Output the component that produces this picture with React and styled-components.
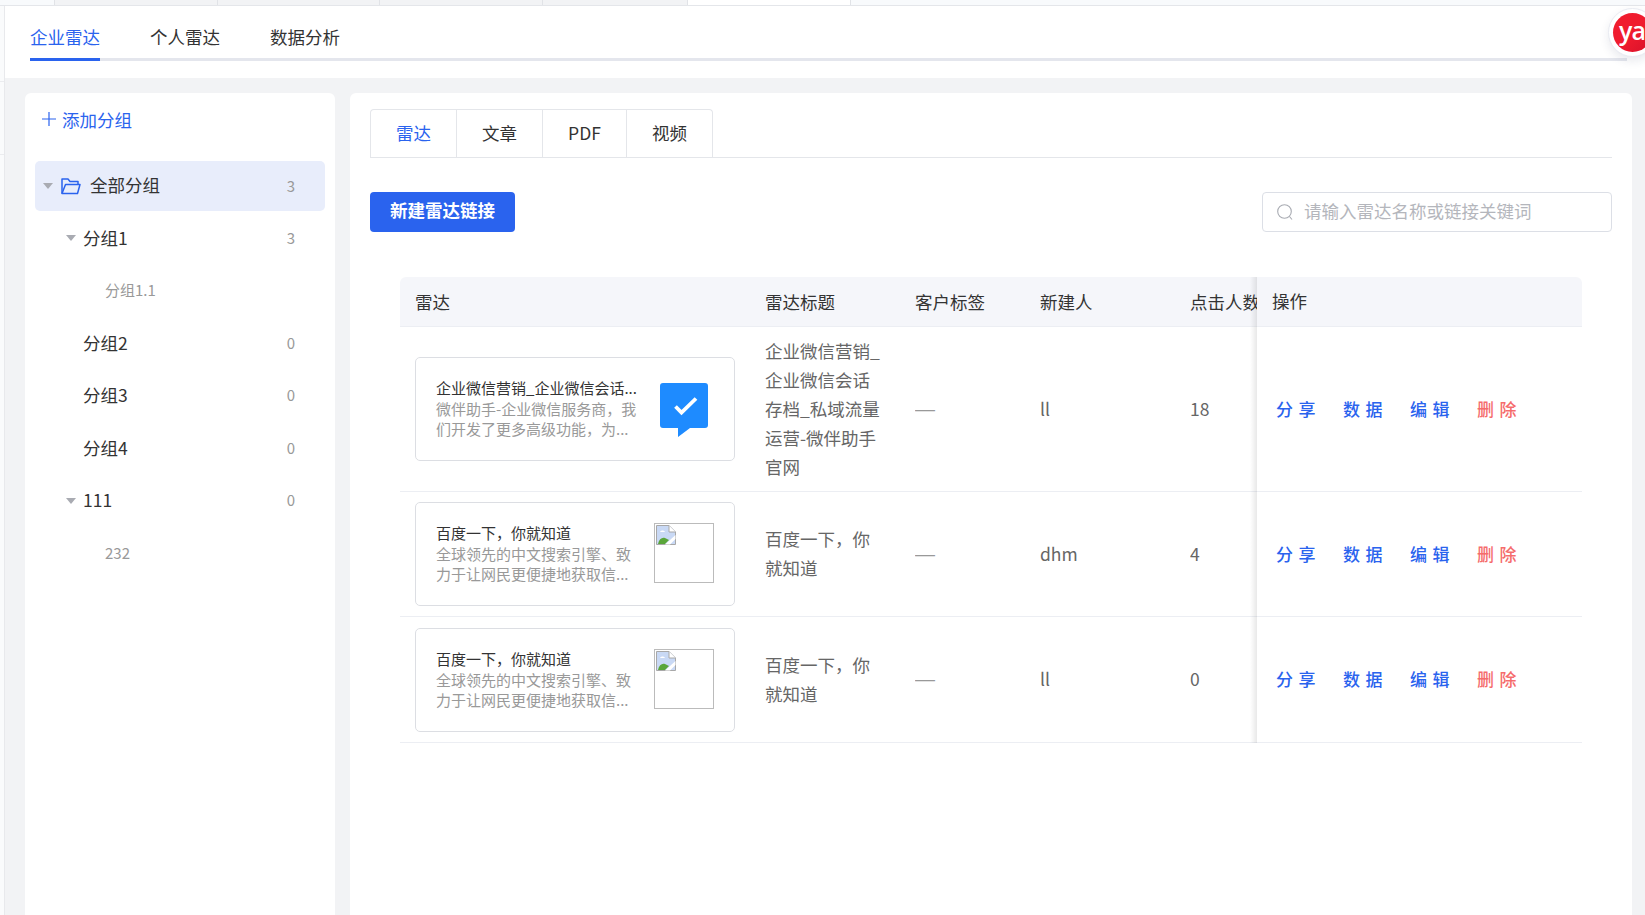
import React from 'react';
import styled, { createGlobalStyle } from 'styled-components';

const GlobalStyle = createGlobalStyle`
  html, body {
    margin: 0;
    padding: 0;
    height: 100%;
    overflow: hidden;
    background: #f2f3f5;
  }
  * { box-sizing: border-box; }
  body {
    font-family: "Noto Sans CJK SC", "Noto Sans", sans-serif;
    color: #333;
  }
`;

const Page = styled.div`
  width: 1645px;
  height: 915px;
  display: flex;
  flex-direction: column;
  position: relative;
  overflow: hidden;
`;

const TopStrip = styled.div`
  height: 6px;
  flex: none;
  display: flex;
  background: #f8fafc;
  border-bottom: 1px solid #e4e6ea;
`;

const StripTab = styled.div`
  width: ${(p) => p.$w}px;
  flex: none;
  background: ${(p) => p.$bg || '#f2f3f5'};
  border-right: 1px solid #e1e3e7;
`;

const Shell = styled.div`
  flex: 1;
  display: flex;
  min-height: 0;
`;

const Rail = styled.div`
  width: 5px;
  flex: none;
  border-right: 1px solid #e8e9ec;
  background:
    linear-gradient(#ebecef, #ebecef) 0 75px / 100% 1px no-repeat,
    linear-gradient(#ebecef, #ebecef) 0 148px / 100% 1px no-repeat,
    #fafbfc;
`;

const Main = styled.div`
  flex: 1;
  min-width: 0;
  display: flex;
  flex-direction: column;
`;

const HeadBar = styled.div`
  height: 72px;
  flex: none;
  background: #fff;
  padding: 0 18px 0 25px;
`;

const HeadTabs = styled.div`
  height: 55px;
  display: flex;
  gap: 50px;
  border-bottom: 3px solid #e4e6ed;
`;

const HeadTab = styled.div`
  height: 55px;
  width: 70px;
  font-size: 17.5px;
  line-height: 62px;
  white-space: nowrap;
  color: ${(p) => (p.$active ? '#2a63ee' : '#333')};
  border-bottom: 3px solid ${(p) => (p.$active ? '#2a63ee' : 'transparent')};
`;

const Content = styled.div`
  flex: 1;
  min-height: 0;
  display: flex;
  gap: 15px;
  padding: 15px 13px 0 20px;
`;

const SidePanel = styled.aside`
  width: 310px;
  flex: none;
  background: #fff;
  border-radius: 6px 6px 0 0;
  padding: 0 10px;
`;

const AddGroup = styled.div`
  height: 68px;
  padding: 0 0 16px 7px;
  display: flex;
  align-items: center;
  gap: 6px;
  font-size: 17.5px;
  color: #2a63ee;
`;

const TreeRow = styled.div`
  height: ${(p) => (p.$root ? 50 : 52.5)}px;
  display: flex;
  align-items: center;
  padding-left: ${(p) => p.$indent}px;
  padding-right: 30px;
  border-radius: 5px;
  background: ${(p) => (p.$root ? '#e8edfb' : 'transparent')};
  margin-bottom: ${(p) => (p.$root ? 1 : 0)}px;
`;

const Caret = styled.span`
  width: 0;
  height: 0;
  flex: none;
  margin-right: 7px;
  border-left: 5px solid transparent;
  border-right: 5px solid transparent;
  border-top: 6px solid #a9abb2;
`;

const FolderIcon = styled.svg`
  width: 20px;
  height: 18px;
  flex: none;
  margin: 0 9px 0 1px;
`;

const RowLabel = styled.span`
  flex: 1;
  margin-top: ${(p) => (p.$top ? -4 : -2)}px;
  font-size: ${(p) => (p.$leaf ? 15 : 17.5)}px;
  color: ${(p) => (p.$leaf ? '#999' : '#333')};
  white-space: nowrap;
`;

const RowCount = styled.span`
  margin-top: -2px;
  font-size: 15px;
  color: #999;
`;

const MainPanel = styled.section`
  flex: 1;
  min-width: 0;
  background: #fff;
  border-radius: 6px 6px 0 0;
  padding: 16px 20px 0 20px;
`;

const TypeTabs = styled.div`
  display: flex;
  height: 49px;
  border-bottom: 1px solid #e4e6ea;
`;

const TypeTab = styled.div`
  width: ${(p) => p.$w}px;
  height: 48px;
  padding-bottom: 2px;
  display: flex;
  align-items: center;
  justify-content: center;
  font-size: 17.5px;
  color: ${(p) => (p.$active ? '#2a63ee' : '#333')};
  border: 1px solid #e4e6ea;
  border-left-width: ${(p) => (p.$first ? 1 : 0)}px;
  border-bottom: 0;
  border-radius: ${(p) => (p.$first ? '4px 0 0 0' : '0')};
  &:last-child { border-radius: 0 4px 0 0; }
`;

const ActionBar = styled.div`
  margin-top: 34px;
  display: flex;
  justify-content: space-between;
  align-items: center;
`;

const NewButton = styled.button`
  width: 145px;
  height: 40px;
  border: 0;
  border-radius: 4px;
  background: #2a63ee;
  color: #fff;
  font-family: inherit;
  font-size: 17.5px;
  font-weight: 700;
  padding: 0 0 5px;
`;

const SearchBox = styled.div`
  width: 350px;
  height: 40px;
  border: 1px solid #dcdfe6;
  border-radius: 4px;
  display: flex;
  align-items: center;
  gap: 11px;
  padding-left: 14px;
  font-size: 17.5px;
  color: #b4b6bc;
`;

const SearchText = styled.span`
  margin-top: -4px;
`;

const Table = styled.div`
  margin: 45px 30px 0 30px;
`;

const GRID = '365px 150px 125px 150px 67px 1fr';

const HeadRow = styled.div`
  display: grid;
  grid-template-columns: ${GRID};
  height: 50px;
  background: #f5f6fa;
  border-bottom: 1px solid #eceef3;
  border-radius: 6px 6px 0 0;
  align-items: center;
  font-size: 17.5px;
  color: #333;
`;

const BodyRow = styled.div`
  display: grid;
  grid-template-columns: ${GRID};
  height: ${(p) => p.$h}px;
  border-bottom: 1px solid #eceef3;
  align-items: center;
  font-size: 17.5px;
  color: #666;
`;

const Cell = styled.div`
  padding-left: ${(p) => (p.$first ? 15 : 0)}px;
  padding-right: ${(p) => (p.$wrap ? 30 : 0)}px;
  padding-bottom: ${(p) => (p.$lift ? 2 : 0)}px;
  white-space: ${(p) => (p.$wrap ? 'normal' : 'nowrap')};
  overflow: hidden;
  line-height: ${(p) => (p.$wrap ? '29px' : 'normal')};
`;

const Dash = styled.span`
  font-family: "Liberation Sans", sans-serif;
  font-size: 20px;
  color: #999;
`;

// fixed right column, its shadow falls over the cells to the left
const FixedCell = styled.div`
  align-self: stretch;
  display: flex;
  align-items: center;
  padding-left: ${(p) => p.$pad}px;
  padding-bottom: ${(p) => p.$lift}px;
  gap: 27px;
  position: relative;
  margin-bottom: -1px;
  &::before {
    content: '';
    position: absolute;
    left: -7px;
    top: 0;
    bottom: 0;
    width: 7px;
    background: linear-gradient(to left, rgba(0, 0, 0, 0.09), rgba(0, 0, 0, 0));
  }
`;

const Card = styled.div`
  width: 320px;
  height: 104px;
  border: 1px solid #dcdee3;
  border-radius: 5px;
  display: flex;
  align-items: center;
  padding-left: 20px;
`;

const CardText = styled.div`
  width: 204px;
  flex: none;
`;

const CardTitle = styled.div`
  font-size: 15px;
  line-height: 20px;
  color: #333;
  white-space: nowrap;
  margin: -1px 0 1px;
`;

const CardDesc = styled.div`
  font-size: 15px;
  line-height: 20px;
  color: #999;
  white-space: nowrap;
`;

const CardThumb = styled.div`
  width: 60px;
  height: 60px;
  flex: none;
  margin: -2px 0 0 14px;
  border: 1px solid #bbb;
  padding: 1px;
`;

const CheckLogo = styled.svg`
  width: 48px;
  height: 54px;
  flex: none;
  margin: 2px 0 0 20px;
`;

const ActionLink = styled.span`
  font-size: 17px;
  font-weight: 500;
  letter-spacing: 5.5px;
  white-space: nowrap;
  width: 40px;
  color: ${(p) => (p.$danger ? '#f56c6c' : '#2a63ee')};
`;

const Badge = styled.div`
  position: absolute;
  left: 1608px;
  top: 8px;
  width: 49px;
  height: 49px;
  border-radius: 50%;
  background: #fff;
  border: 1px solid #e9ebf2;
  box-shadow: 0 4px 10px rgba(40, 50, 90, 0.1);
  padding: 4px;
`;

const BadgeInner = styled.div`
  width: 100%;
  height: 100%;
  border-radius: 50%;
  background: linear-gradient(135deg, #f01c2e 50%, #d7102a);
  color: #fff;
  font-family: "Open Sans", sans-serif;
  font-size: 25px;
  font-weight: 600;
  line-height: 35px;
  letter-spacing: -1px;
  padding-left: 6px;
  overflow: hidden;
`;

const Folder = () => (
  <FolderIcon viewBox="0 0 20 18" fill="none" stroke="#2a63ee" strokeWidth="1.5" strokeLinejoin="round">
    <path d="M1 16.5V2h6l2 2.5h8V7.5" />
    <path d="M4.5 7.5H19L16.5 16.5H1z" />
  </FolderIcon>
);

const BrokenImage = () => (
  <svg width="20" height="20" viewBox="0 0 20 20" style={{ display: 'block' }}>
    <path d="M0.5 0.5H13L19.5 7V19.5H0.5z" fill="#c9d9f5" stroke="#a8a8a8" />
    <path d="M13 0.5V7H19.5" fill="#fff" stroke="#a8a8a8" />
    <path d="M4 7c1-2 4-2 5 0z" fill="#fff" />
    <path d="M2 19c1-5 4-7 7-6l4 2-4 4z" fill="#5aa63a" />
    <path d="M9 19.5L19.5 10v4L14 19.5z" fill="#fff" />
  </svg>
);

const Check = () => (
  <CheckLogo viewBox="0 0 48 54">
    <path d="M3 0H45a3 3 0 0 1 3 3V42a3 3 0 0 1-3 3H30L18 54V45H3a3 3 0 0 1-3-3V3a3 3 0 0 1 3-3z" fill="#1e8bff" />
    <path d="M15.5 23.5L21.5 29.5L36 15.5" fill="none" stroke="#fff" strokeWidth="3.8" />
  </CheckLogo>
);

const tree = [
  { label: '分组1', count: 3, indent: 31, caret: true },
  { label: '分组1.1', indent: 70, leaf: true },
  { label: '分组2', count: 0, indent: 48 },
  { label: '分组3', count: 0, indent: 48 },
  { label: '分组4', count: 0, indent: 48 },
  { label: '111', count: 0, indent: 31, caret: true },
  { label: '232', indent: 70, leaf: true },
];

const baiduDesc = ['全球领先的中文搜索引擎、致', '力于让网民更便捷地获取信...'];

const rows = [
  {
    h: 165,
    title: '企业微信营销_企业微信会话...',
    desc: ['微伴助手-企业微信服务商，我', '们开发了更多高级功能，为...'],
    logo: true,
    name: '企业微信营销_企业微信会话存档_私域流量运营-微伴助手官网',
    creator: 'll',
    clicks: 18,
  },
  { h: 125, title: '百度一下，你就知道', desc: baiduDesc, name: '百度一下，你就知道', creator: 'dhm', clicks: 4 },
  { h: 126, title: '百度一下，你就知道', desc: baiduDesc, name: '百度一下，你就知道', creator: 'll', clicks: 0 },
];

export default function App() {
  return (
    <Page>
      <GlobalStyle />
      <TopStrip>
        <StripTab $w={55} $bg="#f8fafc" />
        <StripTab $w={163} />
        <StripTab $w={162} />
        <StripTab $w={163} />
        <StripTab $w={145} />
        <StripTab $w={163} $bg="#fff" />
      </TopStrip>
      <Shell>
        <Rail />
        <Main>
          <HeadBar>
            <HeadTabs>
              <HeadTab $active>企业雷达</HeadTab>
              <HeadTab>个人雷达</HeadTab>
              <HeadTab>数据分析</HeadTab>
            </HeadTabs>
          </HeadBar>
          <Content>
            <SidePanel>
              <AddGroup>
                <svg width="14" height="14" viewBox="0 0 14 14" stroke="#2a63ee" strokeWidth="1.2">
                  <path d="M7 0V14M0 7H14" />
                </svg>
                添加分组
              </AddGroup>
              <TreeRow $root $indent={8}>
                <Caret />
                <Folder />
                <RowLabel $top>全部分组</RowLabel>
                <RowCount>3</RowCount>
              </TreeRow>
              {tree.map((item) => (
                <TreeRow key={item.label} $indent={item.indent}>
                  {item.caret && <Caret />}
                  <RowLabel $leaf={item.leaf}>{item.label}</RowLabel>
                  {item.count !== undefined && <RowCount>{item.count}</RowCount>}
                </TreeRow>
              ))}
            </SidePanel>
            <MainPanel>
              <TypeTabs>
                <TypeTab $first $active $w={87}>雷达</TypeTab>
                <TypeTab $w={86}>文章</TypeTab>
                <TypeTab $w={84}>PDF</TypeTab>
                <TypeTab $w={86}>视频</TypeTab>
              </TypeTabs>
              <ActionBar>
                <NewButton>新建雷达链接</NewButton>
                <SearchBox>
                  <svg width="16" height="17" viewBox="0 0 16 17" fill="none" stroke="#a8abb2" strokeWidth="1.1">
                    <circle cx="7.5" cy="7.5" r="6.8" />
                    <path d="M12.5 12.5L15 15.5" />
                  </svg>
                  <SearchText>请输入雷达名称或链接关键词</SearchText>
                </SearchBox>
              </ActionBar>
              <Table>
                <HeadRow>
                  <Cell $first>雷达</Cell>
                  <Cell>雷达标题</Cell>
                  <Cell>客户标签</Cell>
                  <Cell>新建人</Cell>
                  <Cell>点击人数</Cell>
                  <FixedCell $pad={15} $lift={3}>操作</FixedCell>
                </HeadRow>
                {rows.map((row, i) => (
                  <BodyRow key={i} $h={row.h}>
                    <Cell $first>
                      <Card>
                        <CardText>
                          <CardTitle>{row.title}</CardTitle>
                          {row.desc.map((line) => (
                            <CardDesc key={line}>{line}</CardDesc>
                          ))}
                        </CardText>
                        {row.logo ? (
                          <Check />
                        ) : (
                          <CardThumb>
                            <BrokenImage />
                          </CardThumb>
                        )}
                      </Card>
                    </Cell>
                    <Cell $wrap $lift>{row.name}</Cell>
                    <Cell $lift><Dash>—</Dash></Cell>
                    <Cell $lift>{row.creator}</Cell>
                    <Cell $lift>{row.clicks}</Cell>
                    <FixedCell $pad={19} $lift={3}>
                      <ActionLink>分享</ActionLink>
                      <ActionLink>数据</ActionLink>
                      <ActionLink>编辑</ActionLink>
                      <ActionLink $danger>删除</ActionLink>
                    </FixedCell>
                  </BodyRow>
                ))}
              </Table>
            </MainPanel>
          </Content>
        </Main>
      </Shell>
      <Badge>
        <BadgeInner>ya</BadgeInner>
      </Badge>
    </Page>
  );
}
